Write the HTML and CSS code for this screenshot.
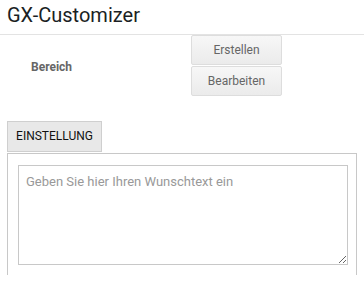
FILE: index.html
```html
<!DOCTYPE html>
<html lang="de">
<head>
    <meta charset="UTF-8">
    <title>GX-Customizer</title>
    <link rel="stylesheet" href="styles.css">
</head>
<body>
    <div class="header">
        <h1>GX-Customizer</h1>
    </div>

    <div class="form-row">
        <div class="form-label">Bereich</div>
        <div class="btn-stack">
            <button class="btn">Erstellen</button>
            <button class="btn">Bearbeiten</button>
        </div>
    </div>

    <div class="tabs">
        <div class="tab">EINSTELLUNG</div>
    </div>

    <div class="panel">
        <textarea class="wish-text" placeholder="Geben Sie hier Ihren Wunschtext ein"></textarea>
    </div>
</body>
</html>
```

FILE: styles.css
```css
* {
    margin: 0;
    padding: 0;
    box-sizing: border-box;
}

body {
    font-family: Roboto, 'Liberation Sans', sans-serif;
    background: #fff;
    color: #222;
}

.header {
    height: 35px;
    border-bottom: 1px solid #e3e3e3;
    padding-left: 7px;
}

.header h1 {
    font-size: 20px;
    font-weight: 400;
    line-height: 30px;
    color: #1b1f24;
}

.form-row {
    display: flex;
    align-items: center;
}

.form-label {
    width: 191px;
    padding: 2px 0 0 31px;
    font-size: 12px;
    font-weight: 700;
    color: #666;
}

.btn-stack {
    display: flex;
    flex-direction: column;
    gap: 1px;
}

.btn {
    width: 91px;
    height: 30px;
    border: 1px solid #ddd;
    border-radius: 2px;
    background: linear-gradient(#f7f7f7, #ebebeb);
    font-family: Roboto, 'Liberation Sans', sans-serif;
    font-size: 12px;
    color: #666;
}

.tabs {
    margin-top: 25px;
    padding-left: 7px;
}

.tab {
    display: inline-block;
    width: 95px;
    height: 31px;
    border: 1px solid #cfcfcf;
    background: #e8e8e8;
    font-size: 12px;
    line-height: 29px;
    text-align: center;
    color: #111;
}

.panel {
    margin: 1px 0 0 7px;
    width: 350px;
    height: 122px;
    border: 1px solid #c8c8c8;
    border-bottom: none;
    padding: 11px 0 0 10px;
}

.wish-text {
    display: block;
    width: 330px;
    height: 100px;
    border: 1px solid #c8c8c8;
    padding: 8px 7px;
    font-family: Roboto, 'Liberation Sans', sans-serif;
    font-size: 13px;
    color: #333;
}

.wish-text::placeholder {
    color: #999;
}
```
